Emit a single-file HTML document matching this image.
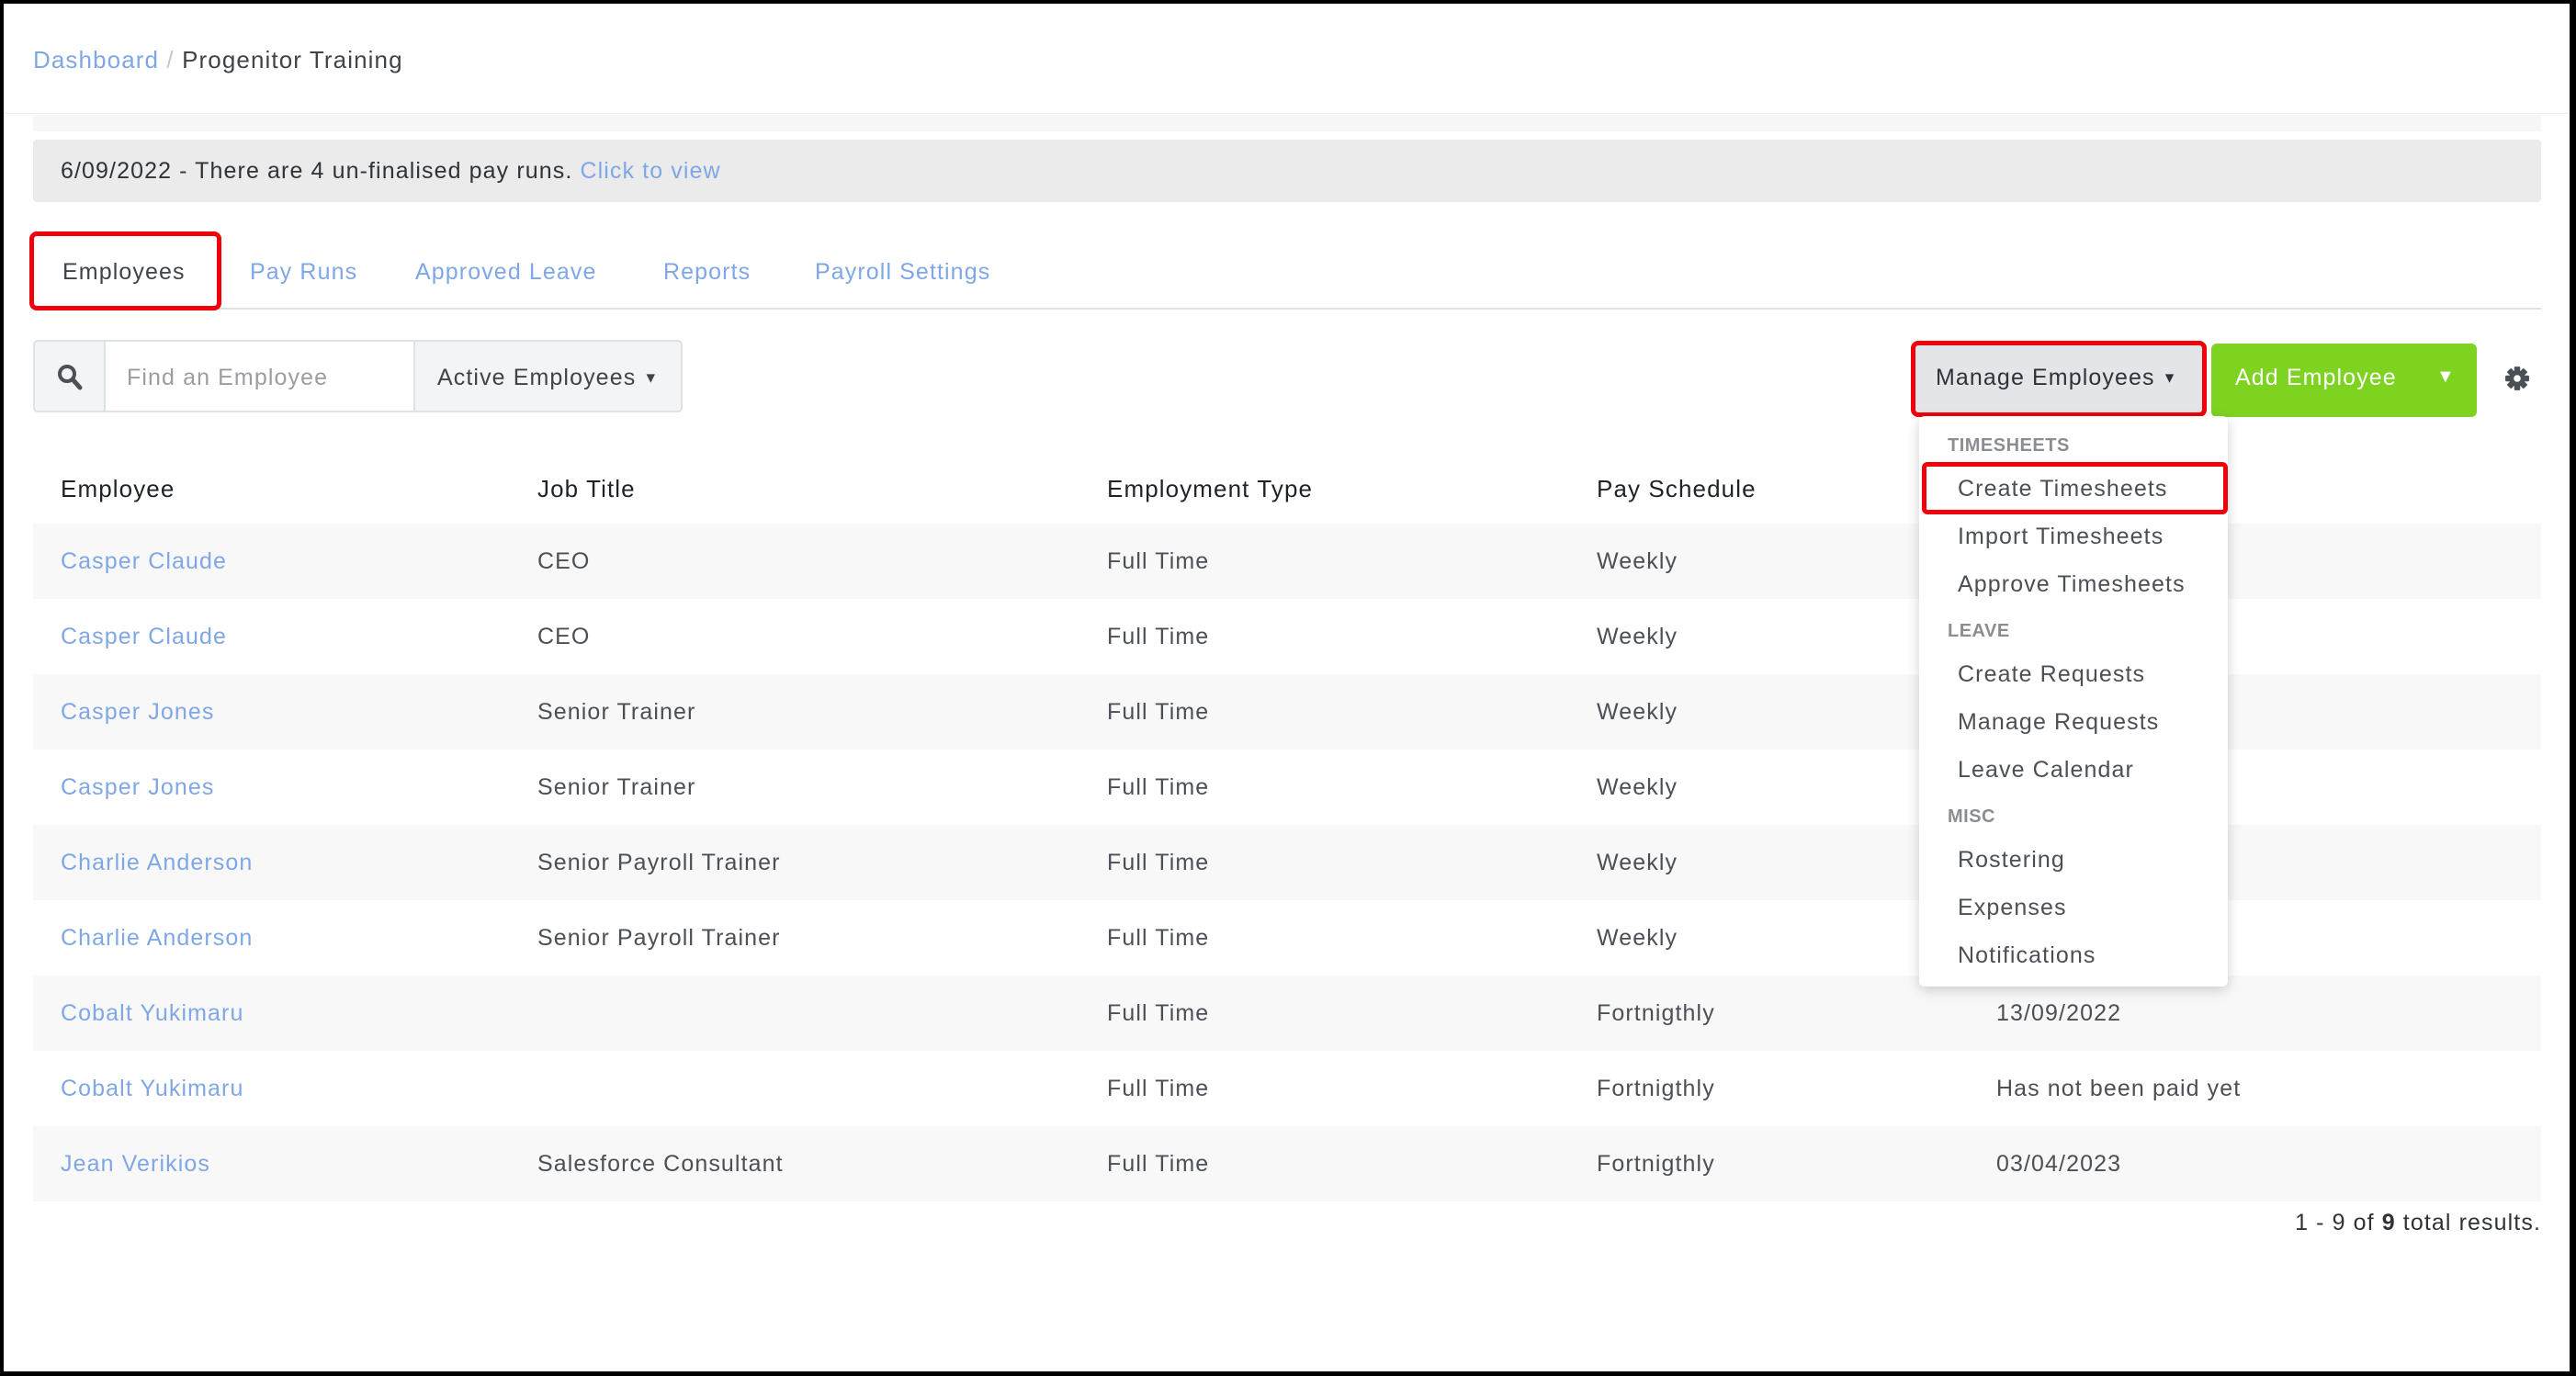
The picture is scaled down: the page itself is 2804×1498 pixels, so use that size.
<!DOCTYPE html>
<html><head><meta charset="utf-8"><style>
*{margin:0;padding:0;box-sizing:border-box}
body{width:2804px;height:1498px;background:#000;position:relative;overflow:hidden;font-family:"Liberation Sans",sans-serif;font-size:25px;color:#4b4f56;letter-spacing:1.1px}
#w{position:absolute;left:4px;top:4px;width:2793px;height:1489px;background:#fff}
.a{position:absolute;white-space:nowrap}
.l{color:#7fa7e6}
.row{position:absolute;left:32px;width:2730px;height:82px}
.row.g{background:#f8f8f8}
.row span{position:absolute;top:28px;line-height:26px}
.dd div{position:absolute;left:42px;line-height:26px}
.dd .h{left:31px;font-size:20px;color:#8a8d91;font-weight:bold;letter-spacing:0.5px}
</style></head><body><div id="w">
<div class="a" style="left:32px;top:46px;font-size:26px"><span class="l">Dashboard</span><span style="color:#c8c8c8"> / </span> <span style="color:#3f434a">Progenitor Training</span></div>
<div class="a" style="left:0;top:119px;width:2793px;height:1px;background:#ececec"></div>
<div class="a" style="left:32px;top:121px;width:2730px;height:18px;background:#f7f7f7"></div>
<div class="a" style="left:32px;top:148px;width:2730px;height:68px;background:#ebebeb;border-radius:4px"></div>
<div class="a" style="left:62px;top:168px;font-size:25px;color:#2f3338">6/09/2022 - There are 4 un-finalised pay runs. <span class="l">Click to view</span></div>
<div class="a" style="left:32px;top:331px;width:2730px;height:2px;background:#e0e0e0"></div>
<div class="a" style="left:28px;top:248px;width:209px;height:86px;border:5px solid #f0000a;border-radius:8px;background:#fff"></div>
<div class="a" style="left:64px;top:278px;color:#3f434a">Employees</div>
<div class="a l" style="left:268px;top:278px">Pay Runs</div>
<div class="a l" style="left:448px;top:278px">Approved Leave</div>
<div class="a l" style="left:718px;top:278px">Reports</div>
<div class="a l" style="left:883px;top:278px">Payroll Settings</div>
<div class="a" style="left:32px;top:366px;width:707px;height:79px;border:2px solid #dfe2e5;border-radius:5px;background:#f2f4f6"></div>
<div class="a" style="left:109px;top:368px;width:339px;height:75px;background:#fff;border-left:2px solid #dfe2e5;border-right:2px solid #dfe2e5"></div>
<svg class="a" style="left:58px;top:392px" width="28" height="30" viewBox="0 0 28 30"><circle cx="11" cy="11" r="8" fill="none" stroke="#4b4f56" stroke-width="4"/><path d="M17 17l8 9" stroke="#4b4f56" stroke-width="5" stroke-linecap="round"/></svg>
<div class="a" style="left:134px;top:393px;color:#9a9da2">Find an Employee</div>
<div class="a" style="left:472px;top:393px;color:#3f434a">Active Employees <span style="font-size:16px;vertical-align:middle">▼</span></div>
<div class="a" style="left:2076px;top:367px;width:322px;height:83px;border:5px solid #f0000a;border-radius:8px;background:#e3e5e9"></div>
<div class="a" style="left:2103px;top:393px;color:#2f3338">Manage Employees <span style="font-size:16px;vertical-align:middle">▼</span></div>
<div class="a" style="left:2403px;top:370px;width:289px;height:80px;background:#7ed321;border-radius:6px"></div>
<div class="a" style="left:2429px;top:393px;color:#fff">Add Employee</div>
<div class="a" style="left:2648px;top:395px;color:#fff;font-size:20px">▼</div>
<svg class="a" style="left:2722px;top:394px" width="28" height="28" viewBox="0 0 26 26"><g fill="#4b4f56"><circle cx="13" cy="13" r="8"/><rect x="10" y="1" width="6" height="24" rx="1"/><rect x="1" y="10" width="24" height="6" rx="1"/><rect x="10" y="1" width="6" height="24" rx="1" transform="rotate(45 13 13)"/><rect x="10" y="1" width="6" height="24" rx="1" transform="rotate(-45 13 13)"/></g><circle cx="13" cy="13" r="3.5" fill="#fff"/></svg>
<div class="a" style="left:62px;top:513px;color:#1f2328;font-size:26px">Employee</div>
<div class="a" style="left:581px;top:513px;color:#1f2328;font-size:26px">Job Title</div>
<div class="a" style="left:1201px;top:513px;color:#1f2328;font-size:26px">Employment Type</div>
<div class="a" style="left:1734px;top:513px;color:#1f2328;font-size:26px">Pay Schedule</div>
<div class="row g" style="top:566px"><span class="l" style="left:30px">Casper Claude</span><span style="left:549px">CEO</span><span style="left:1169px">Full Time</span><span style="left:1702px">Weekly</span></div>
<div class="row" style="top:648px"><span class="l" style="left:30px">Casper Claude</span><span style="left:549px">CEO</span><span style="left:1169px">Full Time</span><span style="left:1702px">Weekly</span></div>
<div class="row g" style="top:730px"><span class="l" style="left:30px">Casper Jones</span><span style="left:549px">Senior Trainer</span><span style="left:1169px">Full Time</span><span style="left:1702px">Weekly</span></div>
<div class="row" style="top:812px"><span class="l" style="left:30px">Casper Jones</span><span style="left:549px">Senior Trainer</span><span style="left:1169px">Full Time</span><span style="left:1702px">Weekly</span></div>
<div class="row g" style="top:894px"><span class="l" style="left:30px">Charlie Anderson</span><span style="left:549px">Senior Payroll Trainer</span><span style="left:1169px">Full Time</span><span style="left:1702px">Weekly</span></div>
<div class="row" style="top:976px"><span class="l" style="left:30px">Charlie Anderson</span><span style="left:549px">Senior Payroll Trainer</span><span style="left:1169px">Full Time</span><span style="left:1702px">Weekly</span></div>
<div class="row g" style="top:1058px"><span class="l" style="left:30px">Cobalt Yukimaru</span><span style="left:1169px">Full Time</span><span style="left:1702px">Fortnigthly</span><span style="left:2137px">13/09/2022</span></div>
<div class="row" style="top:1140px"><span class="l" style="left:30px">Cobalt Yukimaru</span><span style="left:1169px">Full Time</span><span style="left:1702px">Fortnigthly</span><span style="left:2137px">Has not been paid yet</span></div>
<div class="row g" style="top:1222px"><span class="l" style="left:30px">Jean Verikios</span><span style="left:549px">Salesforce Consultant</span><span style="left:1169px">Full Time</span><span style="left:1702px">Fortnigthly</span><span style="left:2137px">03/04/2023</span></div>
<div class="a" style="right:31px;top:1313px;color:#2f3338">1 - 9 of <b>9</b> total results.</div>
<div class="a dd" style="left:2085px;top:449px;width:336px;height:621px;background:#fff;border-radius:6px;box-shadow:0 4px 14px rgba(0,0,0,.18)">
<div class="h" style="top:19px">TIMESHEETS</div>
<div style="left:3px;top:50px;width:333px;height:57px;border:5px solid #f0000a;border-radius:6px"></div>
<div style="top:66px">Create Timesheets</div>
<div style="top:118px">Import Timesheets</div>
<div style="top:170px">Approve Timesheets</div>
<div class="h" style="top:221px">LEAVE</div>
<div style="top:268px">Create Requests</div>
<div style="top:320px">Manage Requests</div>
<div style="top:372px">Leave Calendar</div>
<div class="h" style="top:423px">MISC</div>
<div style="top:470px">Rostering</div>
<div style="top:522px">Expenses</div>
<div style="top:574px">Notifications</div>
</div>
</div></body></html>
